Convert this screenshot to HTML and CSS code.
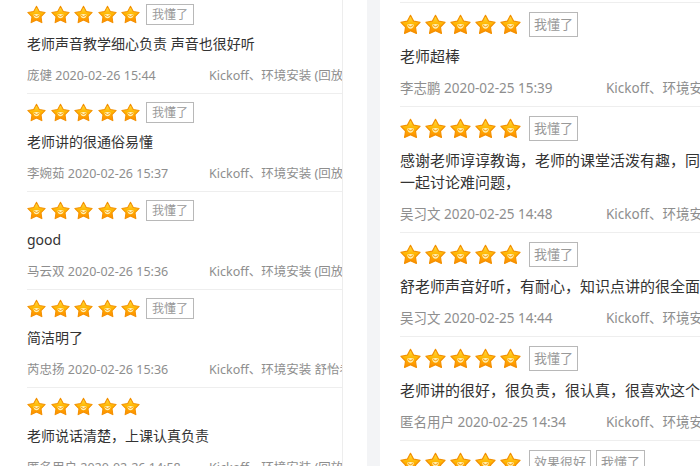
FILE: index.html
```html
<!DOCTYPE html>
<html lang="zh-CN">
<head>
    <meta charset="UTF-8">
    <meta name="viewport" content="width=device-width, initial-scale=1.0">
    <title>课程评价</title>
    <link rel="stylesheet" href="styles.css">
</head>
<body>

<svg class="defs" width="0" height="0" aria-hidden="true">
    <defs>
        <linearGradient id="starFill" x1="0" y1="0" x2="0" y2="1">
            <stop offset="0" stop-color="#ffdf40"/>
            <stop offset="0.5" stop-color="#ffb400"/>
            <stop offset="1" stop-color="#ff8a00"/>
        </linearGradient>
        <symbol id="star" viewBox="0 0 24 24">
            <path d="M12 1.5 L15.53 8.15 L22.94 9.45 L17.71 14.85 L18.76 22.3 L12 19 L5.24 22.3 L6.29 14.85 L1.06 9.45 L8.47 8.15 Z"
                  fill="url(#starFill)" stroke="#f39000" stroke-width="1.3" stroke-linejoin="round"/>
            <path d="M8 12.2 Q12 10.6 16 12.2 Q15 16.6 12 16.8 Q9 16.6 8 12.2 Z" fill="#fff2b8"/>
            <path d="M9.3 13.4 Q12 16 14.7 13.4" fill="none" stroke="#f39000" stroke-width="1.1" stroke-linecap="round"/>
        </symbol>
    </defs>
</svg>

<div class="page">

    <!-- left column -->
    <div class="panel panel-left">
        <div class="list">
            <div class="review">
                <div class="rate">
                    <div class="stars">
                        <svg class="star"><use href="#star"/></svg><svg class="star"><use href="#star"/></svg><svg class="star"><use href="#star"/></svg><svg class="star"><use href="#star"/></svg><svg class="star"><use href="#star"/></svg>
                    </div>
                    <span class="tag">我懂了</span>
                </div>
                <div class="text">老师声音教学细心负责 声音也很好听</div>
                <div class="meta"><span class="who">庞健 2020-02-26 15:44</span><span>Kickoff、环境安装 (回放)</span></div>
            </div>

            <div class="review">
                <div class="rate">
                    <div class="stars">
                        <svg class="star"><use href="#star"/></svg><svg class="star"><use href="#star"/></svg><svg class="star"><use href="#star"/></svg><svg class="star"><use href="#star"/></svg><svg class="star"><use href="#star"/></svg>
                    </div>
                    <span class="tag">我懂了</span>
                </div>
                <div class="text">老师讲的很通俗易懂</div>
                <div class="meta"><span class="who">李婉茹 2020-02-26 15:37</span><span>Kickoff、环境安装 (回放)</span></div>
            </div>

            <div class="review">
                <div class="rate">
                    <div class="stars">
                        <svg class="star"><use href="#star"/></svg><svg class="star"><use href="#star"/></svg><svg class="star"><use href="#star"/></svg><svg class="star"><use href="#star"/></svg><svg class="star"><use href="#star"/></svg>
                    </div>
                    <span class="tag">我懂了</span>
                </div>
                <div class="text">good</div>
                <div class="meta"><span class="who">马云双 2020-02-26 15:36</span><span>Kickoff、环境安装 (回放)</span></div>
            </div>

            <div class="review">
                <div class="rate">
                    <div class="stars">
                        <svg class="star"><use href="#star"/></svg><svg class="star"><use href="#star"/></svg><svg class="star"><use href="#star"/></svg><svg class="star"><use href="#star"/></svg><svg class="star"><use href="#star"/></svg>
                    </div>
                    <span class="tag">我懂了</span>
                </div>
                <div class="text">简洁明了</div>
                <div class="meta"><span class="who">芮忠扬 2020-02-26 15:36</span><span>Kickoff、环境安装 舒怡老师</span></div>
            </div>

            <div class="review">
                <div class="rate">
                    <div class="stars">
                        <svg class="star"><use href="#star"/></svg><svg class="star"><use href="#star"/></svg><svg class="star"><use href="#star"/></svg><svg class="star"><use href="#star"/></svg><svg class="star"><use href="#star"/></svg>
                    </div>
                </div>
                <div class="text">老师说话清楚，上课认真负责</div>
                <div class="meta"><span class="who">匿名用户 2020-02-26 14:58</span><span>Kickoff、环境安装 (回放)</span></div>
            </div>
        </div>
    </div>

    <div class="spacer"></div>
    <div class="gutter"></div>

    <!-- right column -->
    <div class="panel panel-right">
        <div class="list">
            <div class="review">
                <div class="rate">
                    <div class="stars">
                        <svg class="star"><use href="#star"/></svg><svg class="star"><use href="#star"/></svg><svg class="star"><use href="#star"/></svg><svg class="star"><use href="#star"/></svg><svg class="star"><use href="#star"/></svg>
                    </div>
                    <span class="tag">我懂了</span>
                </div>
                <div class="text">老师超棒</div>
                <div class="meta"><span class="who">李志鹏 2020-02-25 15:39</span><span>Kickoff、环境安装 (回放)</span></div>
            </div>

            <div class="review">
                <div class="rate">
                    <div class="stars">
                        <svg class="star"><use href="#star"/></svg><svg class="star"><use href="#star"/></svg><svg class="star"><use href="#star"/></svg><svg class="star"><use href="#star"/></svg><svg class="star"><use href="#star"/></svg>
                    </div>
                    <span class="tag">我懂了</span>
                </div>
                <div class="text">感谢老师谆谆教诲，老师的课堂活泼有趣，同学们在课上<br>一起讨论难问题，</div>
                <div class="meta"><span class="who">吴习文 2020-02-25 14:48</span><span>Kickoff、环境安装 (回放)</span></div>
            </div>

            <div class="review">
                <div class="rate">
                    <div class="stars">
                        <svg class="star"><use href="#star"/></svg><svg class="star"><use href="#star"/></svg><svg class="star"><use href="#star"/></svg><svg class="star"><use href="#star"/></svg><svg class="star"><use href="#star"/></svg>
                    </div>
                    <span class="tag">我懂了</span>
                </div>
                <div class="text">舒老师声音好听，有耐心，知识点讲的很全面</div>
                <div class="meta"><span class="who">吴习文 2020-02-25 14:44</span><span>Kickoff、环境安装 (回放)</span></div>
            </div>

            <div class="review">
                <div class="rate">
                    <div class="stars">
                        <svg class="star"><use href="#star"/></svg><svg class="star"><use href="#star"/></svg><svg class="star"><use href="#star"/></svg><svg class="star"><use href="#star"/></svg><svg class="star"><use href="#star"/></svg>
                    </div>
                    <span class="tag">我懂了</span>
                </div>
                <div class="text">老师讲的很好，很负责，很认真，很喜欢这个老师</div>
                <div class="meta"><span class="who">匿名用户 2020-02-25 14:34</span><span>Kickoff、环境安装 (回放)</span></div>
            </div>

            <div class="review">
                <div class="rate">
                    <div class="stars">
                        <svg class="star"><use href="#star"/></svg><svg class="star"><use href="#star"/></svg><svg class="star"><use href="#star"/></svg><svg class="star"><use href="#star"/></svg><svg class="star"><use href="#star"/></svg>
                    </div>
                    <span class="tag">效果很好</span>
                    <span class="tag">我懂了</span>
                </div>
                <div class="text">老师讲课很清晰</div>
            </div>
        </div>
    </div>

</div>

</body>
</html>
```

FILE: styles.css
```css
body {
    margin: 0;
    background: #fff;
    font-family: "Segoe UI", "Noto Sans", "Noto Sans CJK SC", sans-serif;
    overflow: hidden;
    height: 466px;
}

.defs {
    position: absolute;
    width: 0;
    height: 0;
}

.page {
    display: flex;
    height: 466px;
}

.panel {
    overflow: hidden;
    white-space: nowrap;
    background: #fff;
}

.panel-left {
    width: 315px;
    flex-shrink: 0;
    padding-left: 27px;
    border-right: 1px solid #ededed;
}
.panel-left .list {
    margin-top: -4px;
}

.spacer {
    width: 24px;
    flex-shrink: 0;
}
.gutter {
    width: 13px;
    flex-shrink: 0;
    background: #f3f4f6;
}

.panel-right {
    flex: 1;
    padding-left: 20px;
    padding-top: 2px;
}
.panel-right .list {
    border-top: 1px solid #eee;
}

/* one review */
.review {
    padding: 7px 0;
    border-bottom: 1px solid #eee;
}

.rate {
    display: flex;
    align-items: center;
    height: 22px;
}
.stars {
    display: flex;
    gap: 4.5px;
}
.star {
    width: 19px;
    height: 19px;
}

.tag {
    display: inline-block;
    margin-left: 6px;
    padding: 0 5px;
    height: 19px;
    line-height: 19px;
    font-size: 12px;
    color: #999;
    border: 1px solid #b8b8b8;
    background: #fff;
}

.text {
    margin-top: 9px;
    line-height: 20px;
    font-size: 14px;
    color: #333;
}

.meta {
    display: flex;
    margin-top: 12px;
    line-height: 20px;
    font-size: 12.5px;
    color: #8e8e8e;
}
.meta .who {
    width: 182px;
    flex-shrink: 0;
}

/* right column is drawn a bit larger */
.panel-right .review {
    padding: 8px 0 7px;
}
.panel-right .rate {
    height: 26px;
}
.panel-right .stars {
    gap: 4px;
}
.panel-right .star {
    width: 21px;
    height: 21px;
}
.panel-right .tag {
    margin-left: 8px;
    height: 23px;
    line-height: 23px;
    font-size: 13px;
    padding: 0 4px;
}
.panel-right .tag + .tag {
    margin-left: 5px;
}
.panel-right .text {
    margin-top: 8px;
    line-height: 22px;
    font-size: 15px;
}
.panel-right .meta {
    margin-top: 10px;
    line-height: 22px;
    font-size: 13.5px;
}
.panel-right .meta .who {
    width: 206px;
}
```
